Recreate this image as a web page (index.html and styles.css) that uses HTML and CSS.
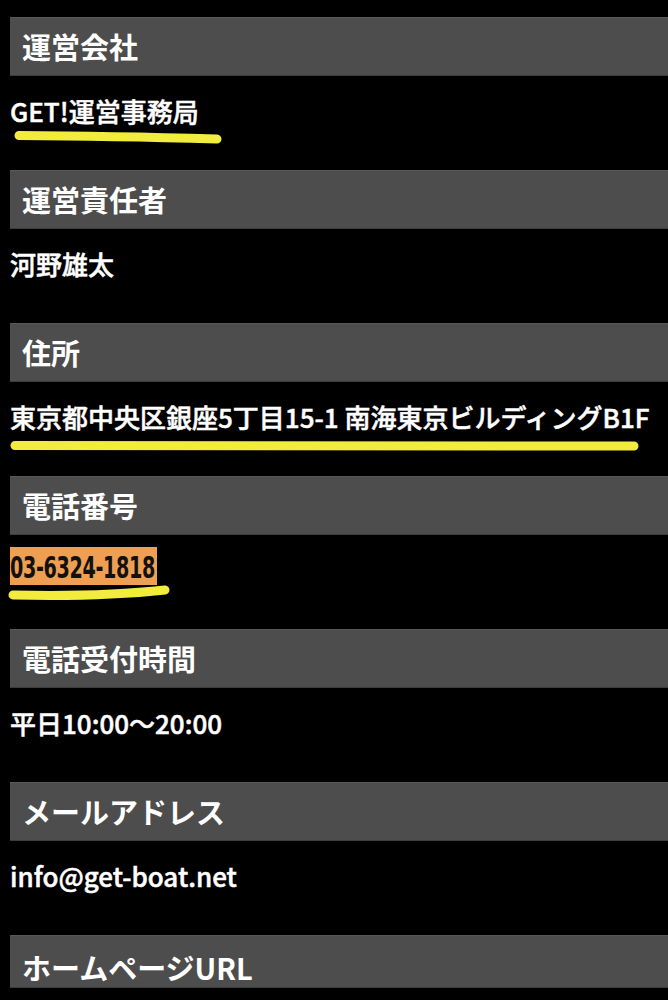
FILE: index.html
```html
<!DOCTYPE html>
<html lang="ja">
<head>
<meta charset="utf-8">
<title>運営会社情報</title>
<link rel="stylesheet" href="styles.css">
</head>
<body>
<dl class="info">
  <dt class="label">運営会社</dt>
  <dd class="value">
    <p class="text">GET!運営事務局</p>
    <svg class="marker" width="658" height="20" viewBox="10 0 658 20"><path d="M19 6.5 Q110 7 217 10" /></svg>
  </dd>

  <dt class="label">運営責任者</dt>
  <dd class="value">
    <p class="text">河野雄太</p>
  </dd>

  <dt class="label">住所</dt>
  <dd class="value">
    <p class="text">東京都中央区銀座5丁目15-1 南海東京ビルディングB1F</p>
    <svg class="marker" width="658" height="20" viewBox="10 0 658 20"><path d="M15 10.5 Q330 10 634 11" stroke-width="11" /></svg>
  </dd>

  <dt class="label">電話番号</dt>
  <dd class="value value-phone">
    <p class="phone"><span class="phone-text">03-6324-1818</span></p>
    <svg class="marker" width="658" height="20" viewBox="10 0 658 20"><path d="M13 10 Q100 12 165 5" /></svg>
  </dd>

  <dt class="label">電話受付時間</dt>
  <dd class="value">
    <p class="text">平日10:00〜20:00</p>
  </dd>

  <dt class="label">メールアドレス</dt>
  <dd class="value">
    <p class="text">info@get-boat.net</p>
  </dd>

  <dt class="label label-cut">ホームページURL</dt>
</dl>
</body>
</html>
```
FILE: styles.css
```css
html, body {
  margin: 0;
  padding: 0;
  background: #000;
}

body {
  font-family: "Noto Sans CJK JP", "Noto Sans", sans-serif;
  color: #fff;
}

.info {
  margin: 0;
  padding: 17px 0 0 10px;
}

.label {
  box-sizing: border-box;
  height: 59px;
  line-height: 57px;
  padding-left: 12px;
  background: #4d4d4d;
  border-top: 1px solid #585858;
  border-bottom: 1px solid #3c3c3c;
  font-size: 29px;
  font-weight: 700;
  white-space: nowrap;
  overflow: hidden;
}

.label-cut {
  height: 53px;
  line-height: 63px;
}

.value {
  box-sizing: border-box;
  height: 94px;
  margin: 0 0 0 -10px;
  padding: 17px 0 0 10px;
}

.text {
  margin: 0;
  font-size: 26px;
  font-weight: 500;
  line-height: 36px;
  white-space: nowrap;
  -webkit-text-stroke: 0.5px #fff;
}

.marker {
  display: block;
  overflow: visible;
}

.marker path {
  fill: none;
  stroke: #f2ec3c;
  stroke-width: 9;
  stroke-linecap: round;
}

.value-phone {
  padding-top: 12px;
}

.phone {
  margin: 0;
  box-sizing: border-box;
  width: 147px;
  height: 38px;
  background: #ef9f52;
  overflow: hidden;
  white-space: nowrap;
}

.phone-text {
  display: inline-block;
  font-family: "DejaVu Sans Condensed", "DejaVu Sans", sans-serif;
  font-stretch: condensed;
  font-weight: 700;
  font-size: 30px;
  line-height: 41px;
  color: #111;
  transform: scaleX(0.71);
  transform-origin: left center;
  letter-spacing: -0.5px;
}
```
